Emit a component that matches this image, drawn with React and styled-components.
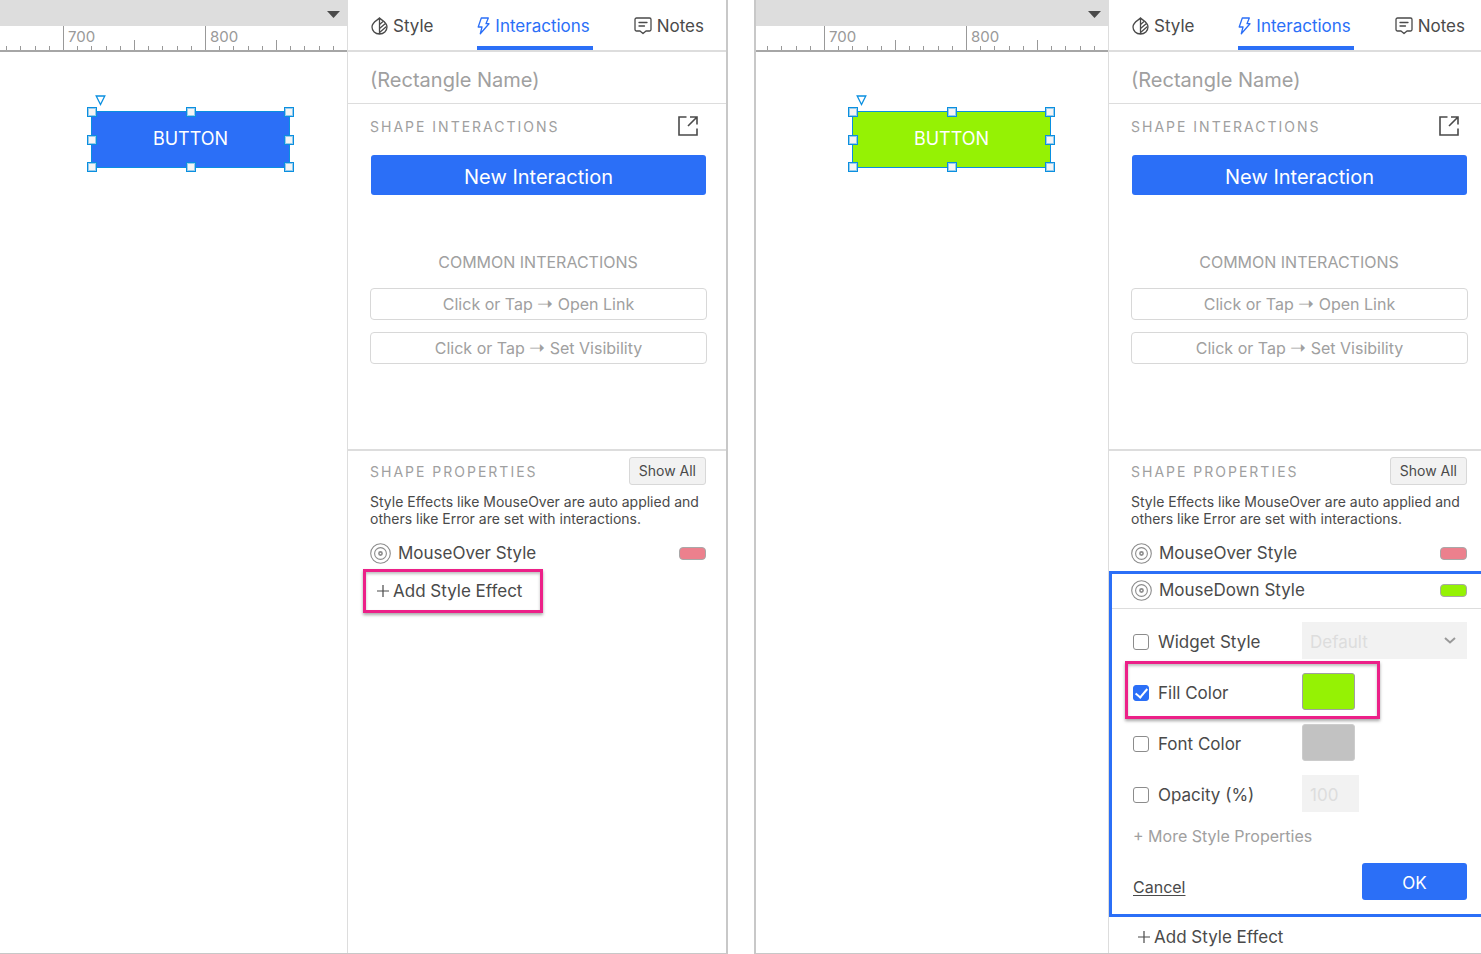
import { useId } from "react"
import styled, { createGlobalStyle } from "styled-components"


const GlobalStyle = createGlobalStyle`
    *, *::before, *::after {
        box-sizing: border-box;
    }

    body {
        margin: 0;
        background: #ffffff;
        color: #4a4a4a;
        font-family: Inter, "Liberation Sans", sans-serif;
        font-size: 17px;
        line-height: 20px;
    }

    button, input, select {
        font: inherit;
        color: inherit;
    }

    button {
        cursor: pointer;
    }
`

const Page = styled.main`
    display: grid;
    grid-template-columns: 728fr 727fr;
    gap: 26px;
    min-height: 100vh;
    overflow: hidden;
`

const Window = styled.section`
    display: flex;
    min-width: 0;
    border: 0 solid #c8c8c8;
    border-bottom-width: 1px;
    border-left-width: ${({ $side }) => ($side === "right" ? "2px" : "0")};
    border-right-width: ${({ $side }) => ($side === "left" ? "2px" : "0")};
`

/* canvas */

const Canvas = styled.div`
    flex: 1;
    min-width: 0;
    display: flex;
    flex-direction: column;
    overflow: hidden;
`

const TopBar = styled.div`
    display: flex;
    justify-content: flex-end;
    align-items: center;
    height: 26px;
    padding: 2px 7px 0 0;
    background: #dddddd;
`

const MenuButton = styled.button`
    display: flex;
    padding: 0;
    border: 0;
    background: none;
`

const Ruler = styled.div`
    display: flex;
    justify-content: flex-end;
    height: 26px;
    border-bottom: 2px solid #a6a6a6;

    svg {
        flex: none;
        display: block;
    }

    text {
        fill: #999999;
        font-size: 15px;
    }
`

const Stage = styled.div`
    position: relative;
    flex: 1;
`

const Widget = styled.div`
    position: absolute;
    top: 59px;
    right: 57px;
    display: flex;
    justify-content: center;
    align-items: center;
    width: 199px;
    height: 57px;
    padding-bottom: 1px;
    border: 1px solid #0a8fe0;
    background: ${({ $fill }) => $fill};
    color: #ffffff;
    font-size: 18px;
`

const Handle = styled.span`
    position: absolute;
    left: ${({ $x }) => $x};
    top: ${({ $y }) => $y};
    width: 10px;
    height: 10px;
    margin: -5px 0 0 -5px;
    border: 1px solid #0a8fe0;
    background: #f4f4f4;
    box-shadow: inset 0 0 0 1px rgba(10, 143, 224, 0.4);
`

const Marker = styled.svg`
    position: absolute;
    top: -17px;
    left: 3px;
`

/* inspector */

const Inspector = styled.aside`
    --edge: ${({ $side }) => ($side === "right" ? "14px" : "20px")};
    flex: none;
    width: ${({ $side }) => ($side === "right" ? "373px" : "379px")};
    border-left: 1px solid #dddddd;
`

const Tabs = styled.nav`
    display: flex;
    justify-content: space-between;
    height: 52px;
    padding: 0 calc(var(--edge) - 1px) 0 23px;
    border-bottom: 2px solid #dddddd;
`

const Tab = styled.button`
    display: flex;
    align-items: center;
    gap: 5px;
    padding: 6px 3px 0 0;
    border: 0;
    border-bottom: 4px solid ${({ $active }) => ($active ? "#2b6ff7" : "transparent")};
    background: none;
    color: ${({ $active }) => ($active ? "#2b6ff7" : "#4a4a4a")};
`

const NameInput = styled.input`
    display: block;
    width: 100%;
    height: 52px;
    padding: 4px 22px 0;
    border: 0;
    border-bottom: 1px solid #dddddd;
    background: none;
    font-size: 20px;
    outline: none;

    &::placeholder {
        color: #a0a0a0;
        opacity: 1;
    }
`

const Interactions = styled.section`
    display: flex;
    flex-direction: column;
    height: 347px;
    padding: 7px var(--edge) 0 22px;
    border-bottom: 2px solid #dddddd;
`

const Heading = styled.div`
    display: flex;
    justify-content: space-between;
    align-items: center;
    height: 30px;
    padding-right: ${({ $inset }) => ($inset ? "8px" : "0")};
`

const Title = styled.h2`
    margin: 0;
    padding-top: 2px;
    color: #a0a0a0;
    font-size: 14px;
    font-weight: 400;
    letter-spacing: 2px;
`

const IconButton = styled.button`
    display: flex;
    padding: 0;
    border: 0;
    background: none;
`

const PrimaryButton = styled.button`
    height: ${({ $small }) => ($small ? "37px" : "40px")};
    width: ${({ $small }) => ($small ? "105px" : "auto")};
    margin: ${({ $small }) => ($small ? "0" : "14px 0 0 1px")};
    padding: 3px 0 0;
    border: 0;
    border-radius: 3px;
    background: #2b6ff7;
    color: #ffffff;
    font-size: ${({ $small }) => ($small ? "17px" : "20px")};
`

const CommonTitle = styled.h3`
    margin: 57px 0 16px;
    color: #a0a0a0;
    font-size: 16px;
    font-weight: 400;
    text-align: center;
`

const OutlineButton = styled.button`
    height: 32px;
    margin: 0 -1px 12px 0;
    border: 1px solid #d8d8d8;
    border-radius: 4px;
    background: #ffffff;
    color: #a0a0a0;
    font-size: 16px;
`

const Arrow = styled.span`
    font-size: 19px;
    line-height: 16px;
`

const Properties = styled.section`
    padding: 5px var(--edge) 0 22px;
`

const ShowAll = styled.button`
    height: 28px;
    padding: 0 9px;
    border: 1px solid #d8d8d8;
    border-radius: 3px;
    background: #f2f2f2;
    font-size: 14px;
`

const Hint = styled.p`
    margin: 7px 0 12px;
    font-size: 14px;
    line-height: 17px;
    white-space: nowrap;
`

const EffectRow = styled.div`
    display: flex;
    align-items: center;
    gap: 7px;
    height: 28px;
`

const EffectName = styled.span`
    flex: 1;
`

const Chip = styled.button`
    width: 27px;
    height: 13px;
    padding: 0;
    border: 1px solid #a8a8a8;
    border-radius: 4px;
    background: ${({ $color }) => $color};
`

const AddButton = styled.button`
    position: relative;
    display: flex;
    align-items: center;
    gap: 4px;
    margin: ${({ $after }) => ($after ? "10px" : "14px")} 0 0 7px;
    padding: 0;
    border: 0;
    background: none;
`

const Highlight = styled.span`
    position: absolute;
    inset: ${({ $inset }) => $inset};
    border: 3px solid #ec2088;
    box-shadow: 0 2px 3px rgba(0, 0, 0, 0.35), inset 0 2px 3px rgba(0, 0, 0, 0.25);
    pointer-events: none;
`

const Editor = styled.form`
    margin: 4px calc(var(--edge) * -1) 0 -22px;
    border: 3px solid #2b6ff7;
    border-right: 0;
`

const EditorHead = styled.div`
    padding: 2px var(--edge) 4px 19px;
    border-bottom: 1px solid #dddddd;
`

const EditorBody = styled.div`
    display: flex;
    flex-direction: column;
    gap: 14px;
    padding: 13px var(--edge) 14px 21px;
`

const Field = styled.div`
    position: relative;
    display: flex;
    align-items: center;
    height: 37px;
`

const FieldLabel = styled.label`
    flex: none;
    display: flex;
    align-items: center;
    gap: 9px;
    width: 169px;
    padding-top: 2px;
`

const Checkbox = styled.input`
    appearance: none;
    display: grid;
    place-items: center;
    width: 16px;
    height: 16px;
    margin: 0;
    border: 1px solid #8c8c8c;
    border-radius: 3px;
    background: #ffffff;

    &:checked {
        border-color: #2b6ff7;
        background: #2b6ff7;
    }

    &:checked::before {
        content: "";
        width: 7px;
        height: 12px;
        margin-bottom: 3px;
        border: solid #ffffff;
        border-width: 0 2px 2px 0;
        transform: rotate(40deg);
    }
`

const SelectBox = styled.div`
    position: relative;
    flex: 1;

    svg {
        position: absolute;
        top: 15px;
        right: 11px;
        pointer-events: none;
    }
`

const Select = styled.select`
    appearance: none;
    display: block;
    width: 100%;
    height: 37px;
    padding: 2px 8px 0;
    border: 0;
    border-radius: 0;
    background: #f2f2f2;
    color: #dddddd;
    opacity: 1;
`

const Swatch = styled.button`
    width: 53px;
    height: 37px;
    padding: 0;
    border: 1px solid ${({ $off }) => ($off ? "#cccccc" : "#a0a0a0")};
    border-radius: 3px;
    background: ${({ $color }) => $color};
`

const NumberInput = styled.input`
    width: 57px;
    height: 37px;
    padding: 2px 8px 0;
    border: 0;
    background: #f2f2f2;
    color: #dddddd;
`

const MoreLink = styled.a`
    color: #a0a0a0;
    font-size: 16px;
    text-decoration: none;
`

const Actions = styled.div`
    display: flex;
    justify-content: space-between;
    align-items: center;
    margin-top: 3px;
`

const Cancel = styled.button`
    margin-top: 11px;
    padding: 0;
    border: 0;
    background: none;
    font-size: 16px;
    text-decoration: underline;
    text-underline-offset: 2px;
`

/* icons */

const StyleIcon = () => (
    <svg width="17" height="18" viewBox="0 0 17 18" fill="none" stroke="currentColor" strokeWidth="1.3">
        <path d="M8.5 1C6.5 3.4 1 5 1 10c0 4 3.2 7 7.5 7s7.5-3 7.5-7c0-5-5.5-6.600-7.500-9zM8.500 1v16" />
        <path d="M8.500 7.500l3.500-3M8.500 11.500l6-5M8.500 15.500l7-6" />
    </svg>
)

const BoltIcon = () => (
    <svg width="13" height="18" viewBox="0 0 13 18" fill="none" stroke="currentColor" strokeWidth="1.300" strokeLinejoin="round">
        <path d="M4.300 1h7L9 6.700h3L3.300 16.700 5 10H1.200z" />
    </svg>
)

const NotesIcon = () => (
    <svg width="18" height="18" viewBox="0 0 18 18" fill="none" stroke="currentColor" strokeWidth="1.300" strokeLinecap="round" strokeLinejoin="round">
        <path d="M2.500 1h13a1.500 1.500 0 0 1 1.500 1.500v10a1.500 1.500 0 0 1-1.500 1.500H12l-3 2.600L6 14H2.500A1.500 1.500 0 0 1 1 12.500v-10A1.500 1.500 0 0 1 2.500 1zM5 5.500h8M5 9h5.500" />
    </svg>
)

const OpenIcon = () => (
    <svg width="20" height="20" viewBox="0 0 20 20" fill="none" stroke="#4a4a4a" strokeWidth="1.600">
        <path d="M8.500 1H1v18h18v-6.500M12 1h7v7.500M19 1l-9 9" />
    </svg>
)

const TargetIcon = () => (
    <svg width="21" height="21" viewBox="0 0 21 21" fill="none" stroke="#8c8c8c" strokeWidth="1.100">
        <circle cx="10.500" cy="10.500" r="9.800" />
        <circle cx="10.500" cy="10.500" r="5.900" />
        <circle cx="10.500" cy="10.500" r="1.600" strokeWidth="1.600" />
    </svg>
)

const PlusIcon = () => (
    <svg width="12" height="12" viewBox="0 0 12 12" stroke="#4a4a4a" strokeWidth="1.200">
        <path d="M6 0v12M0 6h12" />
    </svg>
)

const ChevronIcon = () => (
    <svg width="12" height="8" viewBox="0 0 12 8" fill="none" stroke="#999999" strokeWidth="2">
        <path d="M1 1l5 4.500 5-4.500" />
    </svg>
)

const HANDLES = [
    ["0%", "0%"], ["50%", "0%"], ["100%", "0%"],
    ["0%", "50%"], ["100%", "50%"],
    ["0%", "100%"], ["50%", "100%"], ["100%", "100%"],
]

// one major step (100 units) is 142px wide, split in ten
const RULER_WIDTH = 426

const RulerTicks = () => {
    const ticks = []
    for (let i = 0; i < 30; i++) {
        const x = Math.round(i * RULER_WIDTH / 30)
        const top = i % 10 === 0 ? 0 : i % 5 === 0 ? 14 : 20
        ticks.push(<path key={i} d={`M${x + 0.5} ${top}V24`} />)
    }
    return (
        <svg width={RULER_WIDTH} height="24" viewBox={`0 0 ${RULER_WIDTH} 24`}>
            <g stroke="#999999">{ticks}</g>
            <text x="147" y="16">700</text>
            <text x="289" y="16">800</text>
        </svg>
    )
}

const DesignCanvas = ({ fill }) => (
    <Canvas>
        <TopBar>
            <MenuButton aria-label="Pages">
                <svg width="13" height="7" viewBox="0 0 13 7"><path d="M0 0h13L6.500 7z" fill="#4a4a4a" /></svg>
            </MenuButton>
        </TopBar>
        <Ruler>
            <RulerTicks />
        </Ruler>
        <Stage>
            <Widget $fill={fill}>
                BUTTON
                <Marker width="11" height="11" viewBox="0 0 11 11" fill="#ffffff" stroke="#0a8fe0" strokeWidth="1.300">
                    <path d="M1.200 1h8.600L5.500 9.500z" />
                </Marker>
                {HANDLES.map(([x, y]) => <Handle key={x + y} $x={x} $y={y} />)}
            </Widget>
        </Stage>
    </Canvas>
)

const Effect = ({ name, color }) => (
    <EffectRow>
        <TargetIcon />
        <EffectName>{name}</EffectName>
        <Chip type="button" $color={color} aria-label={`${name} color`} />
    </EffectRow>
)

const CheckField = ({ label, checked, highlight, children }) => {
    const id = useId()
    return (
        <Field>
            <FieldLabel htmlFor={id}>
                <Checkbox id={id} type="checkbox" defaultChecked={checked} />
                {label}
            </FieldLabel>
            {children}
            {highlight && <Highlight $inset="-12px 87px -9px -8px" />}
        </Field>
    )
}

const MouseDownEditor = () => (
    <Editor onSubmit={(e) => e.preventDefault()}>
        <EditorHead>
            <Effect name="MouseDown Style" color="#95f204" />
        </EditorHead>
        <EditorBody>
            <CheckField label="Widget Style">
                <SelectBox>
                    <Select disabled aria-label="Widget Style value">
                        <option>Default</option>
                    </Select>
                    <ChevronIcon />
                </SelectBox>
            </CheckField>
            <CheckField label="Fill Color" checked highlight>
                <Swatch type="button" $color="#95f204" aria-label="Fill Color value" />
            </CheckField>
            <CheckField label="Font Color">
                <Swatch type="button" $color="#c2c2c2" $off aria-label="Font Color value" />
            </CheckField>
            <CheckField label="Opacity (%)">
                <NumberInput disabled defaultValue="100" aria-label="Opacity value" />
            </CheckField>
            <MoreLink href="#more">+ More Style Properties</MoreLink>
            <Actions>
                <Cancel type="button">Cancel</Cancel>
                <PrimaryButton $small>OK</PrimaryButton>
            </Actions>
        </EditorBody>
    </Editor>
)

const InspectorPanel = ({ side, editing }) => (
    <Inspector $side={side}>
        <Tabs>
            <Tab><StyleIcon />Style</Tab>
            <Tab $active><BoltIcon />Interactions</Tab>
            <Tab><NotesIcon />Notes</Tab>
        </Tabs>
        <NameInput placeholder="(Rectangle Name)" aria-label="Rectangle Name" />
        <Interactions>
            <Heading $inset>
                <Title>SHAPE INTERACTIONS</Title>
                <IconButton aria-label="Open in window"><OpenIcon /></IconButton>
            </Heading>
            <PrimaryButton>New Interaction</PrimaryButton>
            <CommonTitle>COMMON INTERACTIONS</CommonTitle>
            <OutlineButton>Click or Tap <Arrow>➝</Arrow> Open Link</OutlineButton>
            <OutlineButton>Click or Tap <Arrow>➝</Arrow> Set Visibility</OutlineButton>
        </Interactions>
        <Properties>
            <Heading>
                <Title>SHAPE PROPERTIES</Title>
                <ShowAll>Show All</ShowAll>
            </Heading>
            <Hint>
                Style Effects like MouseOver are auto applied and<br />
                others like Error are set with interactions.
            </Hint>
            <Effect name="MouseOver Style" color="#ec808d" />
            {editing && <MouseDownEditor />}
            <AddButton $after={editing}>
                <PlusIcon />
                Add Style Effect
                {!editing && <Highlight $inset="-12px -21px -12px -14px" />}
            </AddButton>
        </Properties>
    </Inspector>
)

export default function App() {
    return (
        <>
            <GlobalStyle />
            <Page>
                <Window $side="left">
                    <DesignCanvas fill="#2b6ff7" />
                    <InspectorPanel side="left" />
                </Window>
                <Window $side="right">
                    <DesignCanvas fill="#95f204" />
                    <InspectorPanel side="right" editing />
                </Window>
            </Page>
        </>
    )
}
